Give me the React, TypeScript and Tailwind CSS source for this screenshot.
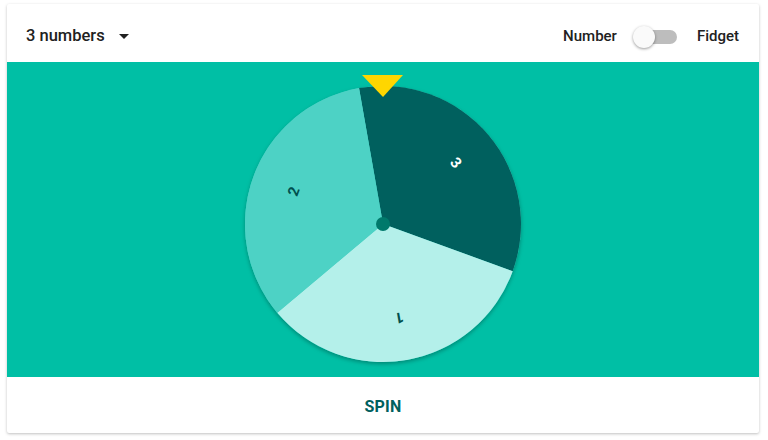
import React from 'react';

const CX = 376;
const CY = 162;
const R = 138;

function pt(deg: number, r: number) {
  const a = (deg * Math.PI) / 180;
  return [CX + r * Math.sin(a), CY - r * Math.cos(a)];
}

function slice(from: number, to: number) {
  const [x1, y1] = pt(from, R);
  const [x2, y2] = pt(to, R);
  return `M${CX} ${CY} L${x1} ${y1} A${R} ${R} 0 0 1 ${x2} ${y2} Z`;
}

const segments = [
  { label: '3', from: -10, to: 110, fill: '#00605e', text: '#ffffff' },
  { label: '1', from: 110, to: 230, fill: '#b4f0ea', text: '#00504e' },
  { label: '2', from: 230, to: 350, fill: '#4dd2c5', text: '#00504e' },
];

function Wheel() {
  return (
    <svg width="752" height="315" viewBox="0 0 752 315" className="block">
      <defs>
        <filter id="wheelShadow" x="-20%" y="-20%" width="140%" height="140%">
          <feDropShadow dx="0" dy="2" stdDeviation="2" floodColor="#000" floodOpacity="0.3" />
        </filter>
      </defs>
      <circle cx={CX} cy={CY} r={R} fill="#4dd2c5" filter="url(#wheelShadow)" />
      {segments.map((s) => {
        const mid = (s.from + s.to) / 2;
        const [lx, ly] = pt(mid, 95);
        return (
          <g key={s.label}>
            <path d={slice(s.from, s.to)} fill={s.fill} />
            <text
              x={lx}
              y={ly}
              fill={s.text}
              fontSize="15"
              fontWeight="700"
              textAnchor="middle"
              dominantBaseline="central"
              transform={`rotate(${mid} ${lx} ${ly})`}
              style={{ fontFamily: 'Roboto, sans-serif' }}
            >
              {s.label}
            </text>
          </g>
        );
      })}
      <circle cx={CX} cy={CY} r="7" fill="#00796b" />
      <polygon points="355,13 396,13 376,35" fill="#ffd600" />
    </svg>
  );
}

export default function App() {
  return (
    <div className="w-[768px] h-[440px] bg-white pt-[4px] pl-[7px] font-['Roboto',sans-serif]">
      <div className="w-[752px] h-[429px] bg-white rounded-[2px] shadow-[0_1px_3px_rgba(0,0,0,0.25)] overflow-hidden flex flex-col">
        <div className="h-[58px] flex items-center justify-between pl-[19px] pr-[20px] pt-[7px]">
          <button className="flex items-center gap-[14px] text-[16.5px] font-medium text-[#212121]">
            <span>3 numbers</span>
            <svg width="10" height="5" viewBox="0 0 10 5">
              <polygon points="0,0 10,0 5,5" fill="#212121" />
            </svg>
          </button>
          <div className="flex items-center text-[15px] font-medium text-[#212121]">
            <span>Number</span>
            <div className="relative w-[45px] h-[22px] ml-[16px] mr-[19px] flex items-center">
              <div className="ml-[7px] w-[37px] h-[14px] rounded-full bg-[#bdbdbd]" />
              <div className="absolute left-0 top-0 w-[22px] h-[22px] rounded-full bg-[#fafafa] shadow-[0_1px_3px_rgba(0,0,0,0.4)]" />
            </div>
            <span>Fidget</span>
          </div>
        </div>
        <div className="h-[315px] bg-[#00bfa5]">
          <Wheel />
        </div>
        <div className="flex-1 flex items-center justify-center pt-[4px]">
          <button className="text-[16px] font-bold text-[#00605e] tracking-[0.2px]">SPIN</button>
        </div>
      </div>
    </div>
  );
}
